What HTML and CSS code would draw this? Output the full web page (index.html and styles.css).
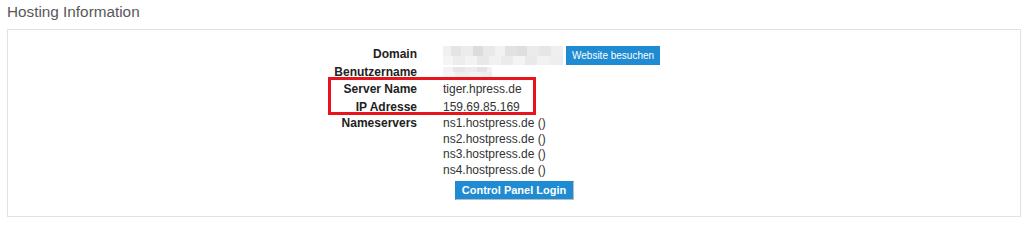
FILE: index.html
```html
<!DOCTYPE html>
<html lang="de">
<head>
<meta charset="utf-8">
<title>Hosting Information</title>
<link rel="stylesheet" href="styles.css">
</head>
<body>
<h2 class="title">Hosting Information</h2>
<div class="panel">
  <div class="info">
    <div class="label row-domain">Domain</div>
    <div class="value row-domain">
      <span class="blur blur-domain"></span>
      <a class="btn btn-visit" href="#">Website besuchen</a>
    </div>
    <div class="label row-user">Benutzername</div>
    <div class="value row-user"><span class="blur blur-user"></span></div>
    <div class="label row-a">Server Name</div>
    <div class="value row-a">tiger.hpress.de</div>
    <div class="label row-b">IP Adresse</div>
    <div class="value row-b">159.69.85.169</div>
    <div class="label row-ns">Nameservers</div>
    <div class="value row-ns">
      <div>ns1.hostpress.de ()</div>
      <div>ns2.hostpress.de ()</div>
      <div>ns3.hostpress.de ()</div>
      <div>ns4.hostpress.de ()</div>
    </div>
    <div class="actions"><a class="btn btn-login" href="#">Control Panel Login</a></div>
  </div>
  <div class="highlight"></div>
</div>
</body>
</html>
```

FILE: styles.css
```css
html, body {
  margin: 0;
  padding: 0;
  background: #ffffff;
}
body {
  padding: 0 3px 0 7px;
  font-family: "Liberation Sans", Arial, sans-serif;
  color: #333;
}
.title {
  margin: 3px 0 0 0;
  font-size: 15.3px;
  line-height: 18px;
  font-weight: normal;
  color: #585858;
}
.panel {
  position: relative;
  margin-top: 8px;
  border: 1px solid #e2e2e2;
  box-shadow: 0 1px 1px rgba(0, 0, 0, 0.05);
  padding: 16px 0 16px 0;
  height: 154px;
}
.info {
  display: grid;
  grid-template-columns: 409px 1fr;
  column-gap: 26px;
  font-size: 12px;
}
.label {
  text-align: right;
  font-weight: bold;
  color: #222;
}
.value {
  color: #333;
}
.row-domain { height: 17px; line-height: 17px; }
.row-user { height: 18px; line-height: 18px; }
.row-a { height: 17px; line-height: 17px; }
.row-b { height: 18px; line-height: 18px; }
.row-ns { line-height: 15.5px; }
.value.row-domain {
  display: flex;
  align-items: flex-start;
  gap: 3px;
}
.value.row-user {
  display: flex;
  align-items: flex-start;
}
.blur {
  display: block;
  background-repeat: no-repeat;
}
.blur-domain {
  width: 120px;
  height: 19px;
  background-image:
    linear-gradient(to right, #f1f1f1 0 8px, #e4e4e4 8px 18px, #ececec 18px 30px, #dcdcdc 30px 40px, #e9e9e9 40px 52px, #f2f2f2 52px 62px, #e2e2e2 62px 74px, #dedede 74px 84px, #ebebeb 84px 96px, #e6e6e6 96px 108px, #efefef 108px 120px),
    linear-gradient(to right, #f5f5f5 0 10px, #ededed 10px 22px, #f3f3f3 22px 34px, #e8e8e8 34px 46px, #f1f1f1 46px 58px, #ebebeb 58px 70px, #f4f4f4 70px 82px, #e9e9e9 82px 94px, #f2f2f2 94px 106px, #eeeeee 106px 116px, #e7eef4 116px 120px);
  background-size: 100% 10px, 100% 9px;
  background-position: 0 0, 0 10px;
}
.blur-user {
  width: 49px;
  height: 10px;
  margin-top: 4px;
  background-image:
    linear-gradient(to right, #f3f3f3 0 10px, #e6e6e6 10px 22px, #ececec 22px 34px, #e3e3e3 34px 44px, #f1f1f1 44px 49px),
    linear-gradient(to right, #f6f6f6 0 12px, #eeeeee 12px 26px, #f2f2f2 26px 38px, #ededed 38px 49px);
  background-size: 100% 5px, 100% 5px;
  background-position: 0 0, 0 5px;
}
.btn {
  display: inline-block;
  box-sizing: border-box;
  text-decoration: none;
  color: #ffffff;
  background: #1e8bd2;
  white-space: nowrap;
}
.btn-visit {
  height: 19px;
  line-height: 19px;
  padding: 0 6px;
  font-size: 10px;
  margin-bottom: -2px;
}
.actions {
  grid-column: 1 / -1;
  display: flex;
  justify-content: center;
  margin-top: 3px;
}
.btn-login {
  height: 19px;
  line-height: 17px;
  padding: 0 6px;
  font-size: 11px;
  font-weight: bold;
  border: 1px solid #1e8bd2;
  border-right-color: #bdbdbd;
  border-bottom-color: #bdbdbd;
  width: 119px;
  text-align: center;
}
.highlight {
  position: absolute;
  left: 320px;
  top: 47px;
  width: 208px;
  height: 38px;
  box-sizing: border-box;
  border: 3px solid #e8141c;
  pointer-events: none;
}
```
